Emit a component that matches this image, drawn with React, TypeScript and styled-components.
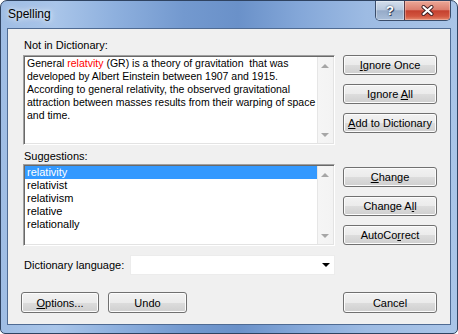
import styled, { createGlobalStyle } from "styled-components";

const suggestions = ["relativity", "relativist", "relativism", "relative", "relationally"];

export default function App() {
  return (
    <>
      <GlobalStyle />
      <Window>
        <TitleBar>
          <Title>Spelling</Title>
          <CaptionGroup>
            <HelpButton>?</HelpButton>
            <CloseButton>
              <svg width="13" height="11" viewBox="0 0 13 11">
                <path d="M2.5 2 L10.5 9 M10.5 2 L2.5 9" stroke="#3a1d22" strokeWidth="4" strokeLinecap="round" />
                <path d="M2.5 2 L10.5 9 M10.5 2 L2.5 9" stroke="#fff" strokeWidth="2.2" strokeLinecap="round" />
              </svg>
            </CloseButton>
          </CaptionGroup>
        </TitleBar>

        <Client>
          <Section>
            <LeftCol>
              <Label $gap={3}>Not in Dictionary:</Label>
              <SunkenBox $h={90}>
                <TextContent>
                  General <Misspelled>relatvity</Misspelled> (GR) is a theory of gravitation  that was
                  {"\n"}developed by Albert Einstein between 1907 and 1915.
                  {"\n"}According to general relativity, the observed gravitational
                  {"\n"}attraction between masses results from their warping of space
                  {"\n"}and time.
                </TextContent>
                <ScrollBar>
                  <ArrowCell><Arrow $dir="up" /></ArrowCell>
                  <ArrowCell><Arrow $dir="down" /></ArrowCell>
                </ScrollBar>
              </SunkenBox>
            </LeftCol>
            <ButtonStack $top={16}>
              <Button $h={20}><Caption><u>I</u>gnore Once</Caption></Button>
              <Button $h={20}><Caption>Ignore <u>A</u>ll</Caption></Button>
              <Button $h={20}><Caption><u>A</u>dd to Dictionary</Caption></Button>
            </ButtonStack>
          </Section>

          <Section $mt={5}>
            <LeftCol>
              <Label $gap={1}>Suggestions:</Label>
              <SunkenBox $h={82}>
                <List>
                  {suggestions.map((s, i) => (
                    <ListRow key={s} $selected={i === 0}>
                      {s}
                    </ListRow>
                  ))}
                </List>
                <ScrollBar>
                  <ArrowCell><Arrow $dir="up" /></ArrowCell>
                  <ArrowCell><Arrow $dir="down" /></ArrowCell>
                </ScrollBar>
              </SunkenBox>
            </LeftCol>
            <ButtonStack $top={17}>
              <Button $h={20}><Caption><u>C</u>hange</Caption></Button>
              <Button $h={20}><Caption>Change A<u>l</u>l</Caption></Button>
              <Button $h={20}><Caption>AutoCo<u>r</u>rect</Caption></Button>
            </ButtonStack>
          </Section>

          <LanguageRow>
            <RowLabel>Dictionary language:</RowLabel>
            <Dropdown>
              <DropButton>
                <Arrow $dir="down" $color="#000" />
              </DropButton>
            </Dropdown>
          </LanguageRow>

          <BottomRow>
            <Button $h={21} $w={78}><Caption><u>O</u>ptions...</Caption></Button>
            <Button $h={21} $w={79}><Caption>Undo</Caption></Button>
            <Spacer />
            <Button $h={21} $w={94}><Caption>Cancel</Caption></Button>
          </BottomRow>
        </Client>
      </Window>
    </>
  );
}

const GlobalStyle = createGlobalStyle`
  html, body {
    margin: 0;
    padding: 0;
    background: #fff;
  }
  body {
    font-family: "Liberation Sans", Arial, sans-serif;
    font-size: 11px;
    color: #000;
  }
`;

const Window = styled.div`
  width: 458px;
  height: 334px;
  box-sizing: border-box;
  border: 1px solid #2f4361;
  border-radius: 7px 7px 5px 5px;
  padding: 0 6px 8px;
  display: flex;
  flex-direction: column;
  background: linear-gradient(
    to right,
    #9fbde4 0%,
    #a9c5e9 12%,
    #8eb0de 25%,
    #7399cf 40%,
    #6a91c9 52%,
    #85a8d9 66%,
    #9dbbe3 80%,
    #aac5e8 100%
  );
`;

const TitleBar = styled.div`
  height: 27px;
  display: flex;
  align-items: flex-start;
  justify-content: space-between;
`;

const Title = styled.div`
  margin-top: 6px;
  padding-left: 1px;
  font-size: 12px;
  line-height: 14px;
  text-shadow: 0 0 5px rgba(255, 255, 255, 0.9), 0 0 9px rgba(255, 255, 255, 0.7);
`;

const CaptionGroup = styled.div`
  width: 76px;
  height: 20px;
  box-sizing: border-box;
  display: flex;
  border: 1px solid #3a4d6b;
  border-top: none;
  border-radius: 0 0 5px 5px;
  overflow: hidden;
`;

const HelpButton = styled.div`
  flex: 0 0 28px;
  display: flex;
  align-items: center;
  justify-content: center;
  font-size: 13px;
  font-weight: bold;
  color: #fff;
  text-shadow: 0 0 2px #2b3a55, 1px 1px 0 #3b4a66;
  background: linear-gradient(#d3deec 0%, #b9c9de 45%, #96abc8 52%, #a9bed9 100%);
  box-shadow: inset 0 0 0 1px rgba(255, 255, 255, 0.35);
`;

const CloseButton = styled.div`
  flex: 1;
  display: flex;
  align-items: center;
  justify-content: center;
  border-left: 1px solid #5a3a45;
  background: linear-gradient(#eba898 0%, #dc7f6f 45%, #c5412f 52%, #d2553f 80%, #e48a6e 100%);
  box-shadow: inset 0 0 0 1px rgba(255, 210, 200, 0.4);
`;

const Client = styled.div`
  flex: 1;
  box-sizing: border-box;
  border: 1px solid #4f6b93;
  background: #f0f0f0;
  padding: 10px 13px 11px 13px;
  display: flex;
  flex-direction: column;
`;

const Section = styled.div<{ $mt?: number }>`
  display: grid;
  grid-template-columns: minmax(0, 1fr) 94px;
  column-gap: 8px;
  margin-top: ${(p) => p.$mt ?? 0}px;
`;

const LeftCol = styled.div`
  min-width: 0;
  margin-left: 2px;
  display: flex;
  flex-direction: column;
`;

const Label = styled.div<{ $gap: number }>`
  height: 13px;
  line-height: 13px;
  padding-left: 1px;
  margin-bottom: ${(p) => p.$gap}px;
`;

const SunkenBox = styled.div<{ $h: number }>`
  height: ${(p) => p.$h}px;
  box-sizing: border-box;
  border: 1px solid;
  border-color: #a0a0a0 #ffffff #ffffff #a0a0a0;
  box-shadow: inset 1px 1px 0 #696969, inset -1px -1px 0 #e3e3e3;
  padding: 1px;
  background: #fff;
  display: flex;
`;

const TextContent = styled.div`
  flex: 1;
  min-width: 0;
  padding-left: 2px;
  font-size: 10.5px;
  line-height: 13px;
  white-space: pre;
  overflow: hidden;
  background: #fff;
`;

const Misspelled = styled.span`
  color: #ff0000;
`;

const List = styled.div`
  flex: 1;
  min-width: 0;
  background: #fff;
`;

const ListRow = styled.div<{ $selected?: boolean }>`
  height: 13px;
  line-height: 13px;
  padding-left: 2px;
  color: ${(p) => (p.$selected ? "#fff" : "#000")};
  background: ${(p) => (p.$selected ? "#3399ff" : "transparent")};
`;

const ScrollBar = styled.div`
  flex: 0 0 16px;
  display: flex;
  flex-direction: column;
  justify-content: space-between;
  background: linear-gradient(to right, #e6e6e6 0, #e6e6e6 1px, #f5f5f5 1px, #f3f3f3 100%);
`;

const ArrowCell = styled.div`
  height: 17px;
  display: flex;
  align-items: center;
  justify-content: center;
`;

const Arrow = styled.div<{ $dir: "up" | "down"; $color?: string }>`
  width: 0;
  height: 0;
  border-left: 4px solid transparent;
  border-right: 4px solid transparent;
  ${(p) =>
    p.$dir === "up"
      ? `border-bottom: 4px solid ${p.$color ?? "#a6a6a6"};`
      : `border-top: 4px solid ${p.$color ?? "#a6a6a6"};`}
`;

const ButtonStack = styled.div<{ $top: number }>`
  padding-top: ${(p) => p.$top}px;
  display: flex;
  flex-direction: column;
  gap: 9px;
`;

const Button = styled.div<{ $h: number; $w?: number }>`
  height: ${(p) => p.$h}px;
  width: ${(p) => (p.$w ? `${p.$w}px` : "auto")};
  box-sizing: border-box;
  border: 1px solid #707070;
  border-radius: 3px;
  background: linear-gradient(#f2f2f2 0%, #ebebeb 50%, #dddddd 50%, #cfcfcf 100%);
  box-shadow: inset 0 0 0 1px #fcfcfc;
  display: flex;
  align-items: center;
  justify-content: center;
`;

const Caption = styled.span`
  white-space: pre;

  u {
    text-decoration: underline;
    text-underline-offset: 1px;
  }
`;

const LanguageRow = styled.div`
  margin-top: 9px;
  margin-left: 2px;
  height: 20px;
  display: flex;
  align-items: center;
`;

const RowLabel = styled.div`
  width: 107px;
  padding-left: 1px;
  box-sizing: border-box;
`;

const Dropdown = styled.div`
  width: 205px;
  height: 20px;
  box-sizing: border-box;
  background: #fff;
  border: 1px solid #ececec;
  display: flex;
  justify-content: flex-end;
`;

const DropButton = styled.div`
  width: 16px;
  display: flex;
  align-items: center;
  justify-content: center;
`;

const BottomRow = styled.div`
  margin-top: 17px;
  display: flex;
  gap: 9px;
`;

const Spacer = styled.div`
  flex: 1;
`;
